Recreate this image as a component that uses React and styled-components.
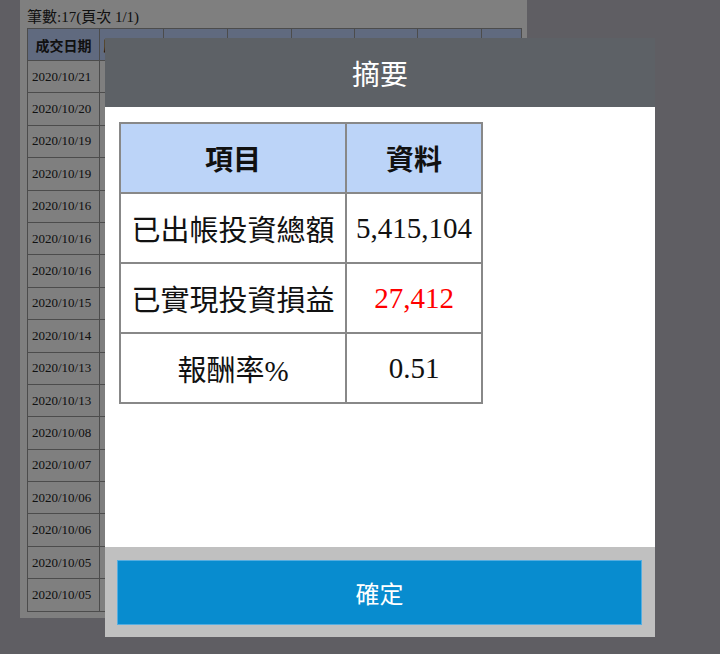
import React from "react";
import styled, { createGlobalStyle } from "styled-components";

const Global = createGlobalStyle`
  html, body { margin: 0; padding: 0; }
  body {
    width: 720px;
    height: 654px;
    overflow: hidden;
    background: #bebcc6;
    font-family: "Liberation Serif", "Noto Sans CJK TC", serif;
  }
`;

const Page = styled.div`
  position: relative;
  width: 720px;
  height: 654px;
`;

const Panel = styled.div`
  margin-left: 20px;
  width: 507px;
  height: 618px;
  box-sizing: border-box;
  background: #ffffff;
  padding: 6px 6px 0 7px;
`;

const Count = styled.div`
  font-size: 15px;
  color: #222;
  height: 22px;
  line-height: 22px;
`;

const ListTable = styled.table`
  border-collapse: collapse;
  width: 494px;
  table-layout: fixed;
  color: #222;
`;

const ListHead = styled.th`
  background: #c0d4ff;
  border: 1px solid #999;
  height: 31px;
  font-family: "Noto Sans CJK TC", sans-serif;
  font-weight: 700;
  font-size: 14px;
  padding: 0;
  text-align: center;
  overflow: hidden;
  white-space: nowrap;
`;

const ListRow = styled.tr`
  height: 32.4px;
`;

const ListCell = styled.td`
  border: 1px solid #999;
  font-size: 13px;
  padding: 0 0 0 4px;
  text-align: left;
  white-space: nowrap;
  overflow: hidden;
`;

const Overlay = styled.div`
  position: absolute;
  inset: 0;
  background: rgba(0, 0, 0, 0.5);
`;

const Modal = styled.div`
  position: absolute;
  left: 105px;
  top: 38px;
  width: 550px;
  height: 599px;
  display: flex;
  flex-direction: column;
`;

const ModalHeader = styled.div`
  height: 69px;
  background: #5d6166;
  color: #fff;
  display: flex;
  align-items: center;
  justify-content: center;
  font-family: "Noto Sans CJK TC", sans-serif;
  font-size: 28px;
  font-weight: 400;
`;

const ModalBody = styled.div`
  flex: 1;
  background: #fff;
  padding: 15px 14px;
`;

const ModalFooter = styled.div`
  height: 90px;
  box-sizing: border-box;
  background: #c0c0c0;
  padding: 13px 13px 12px 12px;
  display: flex;
`;

const ConfirmButton = styled.button`
  flex: 1;
  border: 1px solid #55ade0;
  background: #088ccf;
  color: #fff;
  font-family: "Noto Sans CJK TC", sans-serif;
  font-size: 24px;
  padding: 0;
  cursor: pointer;
`;

const SummaryTable = styled.table`
  border-collapse: collapse;
  width: 362px;
  table-layout: fixed;
  border: 2px solid #777;
`;

const SummaryHead = styled.th`
  background: #bcd4f8;
  height: 68px;
  border: 2px solid #888;
  font-size: 28px;
  font-weight: 700;
  color: #111;
  padding: 0;
  font-family: "Noto Sans CJK TC", sans-serif;
`;

const SummaryCell = styled.td`
  height: 68px;
  border: 2px solid #888;
  font-size: 29px;
  color: ${(p) => (p.$red ? "#ff0000" : "#111")};
  text-align: center;
  padding: 0;
  white-space: nowrap;
`;

const dates = [
  "2020/10/21", "2020/10/20", "2020/10/19", "2020/10/19", "2020/10/16",
  "2020/10/16", "2020/10/16", "2020/10/15", "2020/10/14", "2020/10/13",
  "2020/10/13", "2020/10/08", "2020/10/07", "2020/10/06", "2020/10/06",
  "2020/10/05", "2020/10/05",
];

const colWidths = [72, 64, 64, 64, 63, 63, 64, 40];
const heads = ["成交日期", "股票名稱", "買賣別", "成交股數", "成交價", "成交金額", "手續費", "稅"];

const summary = [
  { label: "已出帳投資總額", value: "5,415,104" },
  { label: "已實現投資損益", value: "27,412", red: true },
  { label: "報酬率%", value: "0.51" },
];

export default function App() {
  return (
    <Page>
      <Global />
      <Panel>
        <Count>筆數:17(頁次 1/1)</Count>
        <ListTable>
          <colgroup>
            {colWidths.map((w, i) => (
              <col key={i} style={{ width: w }} />
            ))}
          </colgroup>
          <thead>
            <tr>
              {heads.map((h, i) => (
                <ListHead key={i}>{h}</ListHead>
              ))}
            </tr>
          </thead>
          <tbody>
            {dates.map((d, i) => (
              <ListRow key={i}>
                <ListCell>{d}</ListCell>
                {colWidths.slice(1).map((_, j) => (
                  <ListCell key={j} />
                ))}
              </ListRow>
            ))}
          </tbody>
        </ListTable>
      </Panel>
      <Overlay />
      <Modal>
        <ModalHeader>摘要</ModalHeader>
        <ModalBody>
          <SummaryTable>
            <colgroup>
              <col style={{ width: 226 }} />
              <col style={{ width: 136 }} />
            </colgroup>
            <thead>
              <tr>
                <SummaryHead>項目</SummaryHead>
                <SummaryHead>資料</SummaryHead>
              </tr>
            </thead>
            <tbody>
              {summary.map((r) => (
                <tr key={r.label}>
                  <SummaryCell>{r.label}</SummaryCell>
                  <SummaryCell $red={r.red}>{r.value}</SummaryCell>
                </tr>
              ))}
            </tbody>
          </SummaryTable>
        </ModalBody>
        <ModalFooter>
          <ConfirmButton>確定</ConfirmButton>
        </ModalFooter>
      </Modal>
    </Page>
  );
}
